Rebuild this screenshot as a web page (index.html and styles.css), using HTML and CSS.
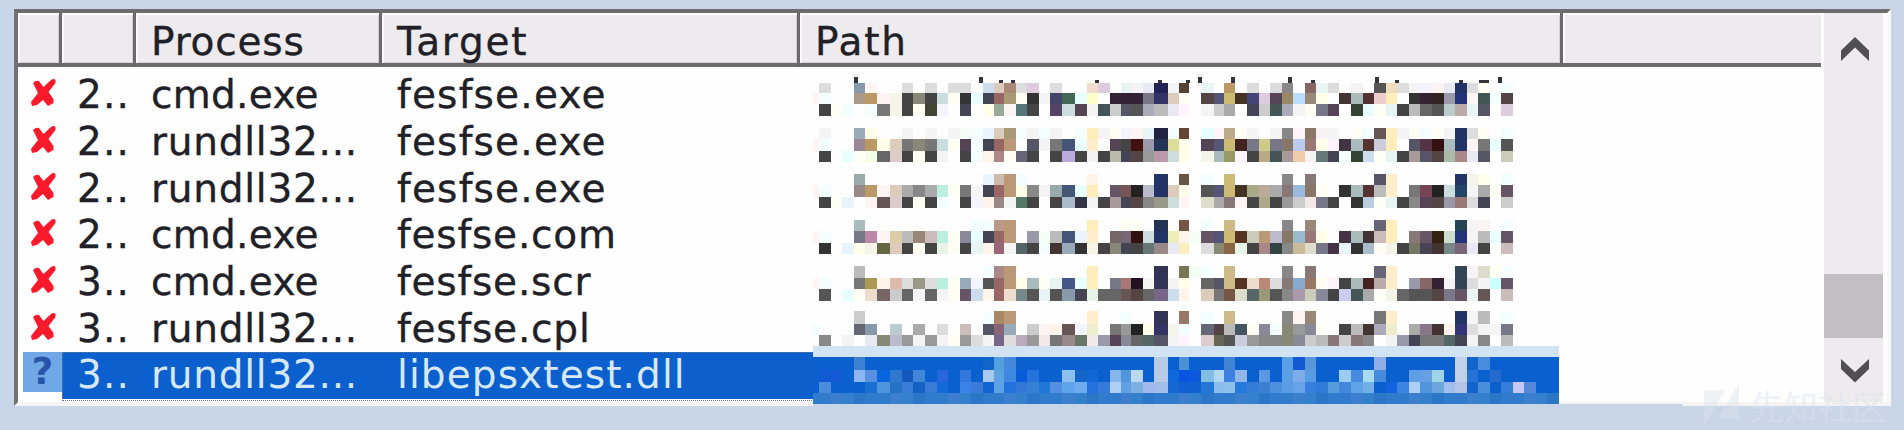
FILE: index.html
```html
<!DOCTYPE html>
<html lang="en">
<head>
<meta charset="utf-8">
<title>Process list</title>
<link rel="stylesheet" href="styles.css">
</head>
<body>
<svg class="defs" width="0" height="0"><symbol id="cross" viewBox="0 0 26 28"><path d="M2 4Q5 1 8 2L12.500 8L20 1Q23-1 24.500 1V4L17.500 13L22.500 20V24L17 27L12 21L6 26L1 27L0 23L7 14Z" fill="#fa1a2c"/></symbol></svg>
<main class="frame">
  <section class="list">
    <div class="grid header">
      <div class="th"></div><div class="th"></div>
      <div class="th"><span class="t process">Process</span></div>
      <div class="th"><span class="t target">Target</span></div>
      <div class="th"><span class="t path">Path</span></div>
      <div class="th last"></div>
    </div>
    <div class="rows">
      <div class="grid row"><svg class="x"><use href="#cross"/></svg><span class="t num">2..</span><span class="t cmd">cmd.exe</span><span class="t exe">fesfse.exe</span></div>
      <div class="grid row"><svg class="x"><use href="#cross"/></svg><span class="t num">2..</span><span class="t run">rundll32...</span><span class="t exe">fesfse.exe</span></div>
      <div class="grid row"><svg class="x"><use href="#cross"/></svg><span class="t num">2..</span><span class="t run">rundll32...</span><span class="t exe">fesfse.exe</span></div>
      <div class="grid row"><svg class="x"><use href="#cross"/></svg><span class="t num">2..</span><span class="t cmd">cmd.exe</span><span class="t com">fesfse.com</span></div>
      <div class="grid row"><svg class="x"><use href="#cross"/></svg><span class="t num">3..</span><span class="t cmd">cmd.exe</span><span class="t com">fesfse.scr</span></div>
      <div class="grid row"><svg class="x"><use href="#cross"/></svg><span class="t num">3..</span><span class="t run">rundll32...</span><span class="t com">fesfse.cpl</span></div>
      <div class="grid row selected"><span class="question">?</span><span class="t num">3..</span><span class="t run">rundll32...</span><span class="t lib">libepsxtest.dll</span></div>
    </div>
  </section>
  <aside class="scrollbar">
    <svg class="arrow" viewBox="0 0 28 24"><path d="M0 13.5L14 0L28 13.5V24L14 10.5L0 24Z"/></svg>
    <div class="thumb"></div>
    <svg class="arrow down" viewBox="0 0 28 24"><path d="M0 0L14 13L28 0V10L14 23.500L0 10Z"/></svg>
  </aside>
</main>
<svg class="mosaic" id="mosaic" width="1904" height="430"></svg>
<div class="watermark"><svg width="36" height="42" viewBox="0 0 36 42"><path d="M0 6H21L0 42ZM35 0V35H13Z"/></svg><span>先知社区</span></div>
<script src="mosaic.js"></script>
</body>
</html>
```
FILE: styles.css
```css
* { box-sizing: border-box; }
body { margin: 0; width: 1904px; height: 430px; overflow: hidden; background: #c8d6e8; font-family: "DejaVu Sans", Verdana, sans-serif; font-size: 39px; color: #202026; }
.defs { position: absolute; }
.frame { display: flex; width: 1877px; height: 397px; margin: 9px 0 0 14px; border: 4px solid; border-color: #6c6c6e #f8f8fa #f6f3f5 #727274; background: #fefefe; }
.list { width: 1806px; }
.grid { display: grid; grid-template-columns: 44px 74px 246px 418px 763px 258px; }
.header { height: 54px; }
.th { height: 54px; padding-left: 15px; background: #edebee; border-right: 3px solid #69696b; border-bottom: 4px solid #6d6b6d; box-shadow: inset 2px 2px #fbfafb, inset -1px -1px #d3d1d4; line-height: 57px; }
.th.last { border-right: 0; box-shadow: inset 2px 2px #fbfafb; }
.rows { padding-top: 5.3px; }
.row { height: 46.7px; line-height: 46px; }
.t { display: block; white-space: pre; -webkit-text-stroke: .35px currentColor; }
.row .t { padding-left: 15px; }
.num { letter-spacing: 1.2px; }
.cmd { letter-spacing: .3px; }
.run { letter-spacing: .75px; }
.exe { letter-spacing: 1.2px; }
.com { letter-spacing: .8px; }
.lib { letter-spacing: 1.1px; }
.selected .t { -webkit-text-stroke: 0; }
.process { letter-spacing: .8px; }
.target { letter-spacing: 1.8px; }
.path { letter-spacing: 1.8px; }
.x { width: 26px; height: 28px; margin: 7px 0 0 13px; }
.selected { position: relative; color: #d7e8fa; background: linear-gradient(#0b60ce, #0b60ce) 44px 0 / 751px 100% no-repeat; }
.selected::after { content: ""; position: absolute; left: 44px; top: 0; width: 751px; height: 100%; border: 1px dotted #63799b; border-right: 0; }
.question { width: 39px; height: 40px; margin-left: 5px; background: #70a8e7; color: #2854a8; font-weight: bold; font-size: 37px; line-height: 40px; text-align: center; }
.scrollbar { width: 59px; height: 389px; background: #edebee; display: flex; flex-direction: column; }
.arrow { width: 28px; height: 24px; margin: 24px 0 0 17px; fill: #505052; }
.thumb { height: 64px; margin-top: 213px; background: #c2c0c3; }
.arrow.down { margin-top: 21px; }
.mosaic { position: absolute; left: 0; top: 0; shape-rendering: crispEdges; }
.watermark { position: absolute; left: 1704px; top: 384px; display: flex; align-items: center; gap: 10px; height: 42px; color: #dce3ed; opacity: .45; font: 34px "Noto Sans CJK SC", sans-serif; }
.watermark svg { fill: #dce3ed; }
```
FILE: mosaic.js
```js
const xs = [812.7,819.3,830.7,842.3,854,865.3,877,890.3,901.7,913.3,925,936.7,948,959.7,971,982.7,994.3,1004.3,1016,1027.3,1039,1050.3,1062,1075,1086.7,1098.3,1110,1121.3,1131.3,1142.7,1154.3,1167.7,1179.3,1189.3,1200.7,1214,1224,1235.3,1247,1258.7,1270,1281.7,1293.3,1304.7,1316.3,1328,1339.3,1351,1362.7,1374,1385.7,1397.3,1409,1420.3,1432,1443.7,1455,1466.7,1478,1489.7,1501.3,1512.7,1524.3,1536,1547.3,1559];

// Each band: top, bottom, then one colour per column; "." leaves a cell empty.
const bands = [
[82.5,93,"   . ddd . . 89a fee . . ddd . | ddd . ddd ddd . cde dcb a87 ddd dcd | . ddd . . edc dcd . dee eee dde | 225 eee 543 . dee . b96 . ddd . | ddd 888 . 866 dee ddd . eee . 555 | edb ddd eee eef fee dde 236 ddd ffe . | eff"],
[93,104.3,"  fee eff . . a98 b96 fee eed 444 887 | 444 cdd ffe 333 dff 445 966 a97 ffe 333 | eee 446 465 dff ffc . 323 323 323 778 | 336 dcb ffe . 544 557 cb7 432 447 dcd | 545 986 bdf 987 ffd . 433 abb 533 ecc | feb . 333 323 322 99a 237 fee 455 eff | 544"],
[104.3,115.6,". 444 ffe eff fff eff 777 eed 444 ffe | 443 eef . 445 . ffd 9a9 fee 577 444 | . 546 cdd 545 eee 455 ccc 556 555 aab | bbb dde fef . eee ccc aaa fff 445 ccc | 455 aab eee ffe 778 545 . 343 dff ffe | dee 444 bbb 666 555 bcc baa dee 556 . | dcd"],
[127.5,139," . eee . . 9ab ffd . . eee . | eee . eee efe eff def dcb a97 eff eee | eff eee . eff feb eee ffe eef fee dee | 224 eff 643 . dff fef ba8 ffe eee . | eee 888 fef 876 eee eee . ffe eff 655 | feb eee ffe eff ffe eee 236 ddd ffe . | eff"],
[139,150.5," fee eff . . 989 b96 ffd dcb 777 887 | 777 cdd ffe 545 eff 445 966 b97 . 556 | eee 777 457 dff fec . 545 444 411 99a | 235 dd9 ffd . 545 557 cb7 422 778 cc8 | 778 876 bce 977 ffd fef 434 abb 533 ccd | feb . 556 534 311 abb 236 fee 777 dff | 555"],
[150.5,162," . 444 . dff ffe efd 666 dcc 444 ffe | 444 eee . 444 eff fed a88 ffe 667 444 | . 444 bad 444 eee 444 bba 445 544 999 | b9a cdd ffd . eed abb 996 fef 444 ba8 | 455 a99 eca eee 677 445 eff 343 cde ffe | dee 444 a99 556 544 aba a88 dde 556 . | ccb"],
[173.5,185," . . . . 9aa . . . . . | . . . . . def cba b97 eff . | . . . . fed . . . . . | 236 . 654 . eff . cb7 . . . | . 888 . 877 . . . . . 556 | fec . . . . . 236 eed ffd . | eff"],
[185,196.6," fee eff . . 988 b96 fee dcb aaa 888 | aaa bed ffe 777 eee 445 966 b97 ffd 888 | eee 9aa 457 dff feb . 656 755 222 bbc | 236 dcb ffd . 555 557 cb7 432 aa8 ba9 | aaa 877 9bd 876 ffe . 333 abb 533 bbb | fec . 777 745 222 cdd 246 eee aaa ffe | 656"],
[196.6,208," . 444 ffe def . fee 655 dcc 444 ffe | 444 eff . 444 eef fed 988 eee 576 444 | . 444 abc 334 eee 444 a99 445 544 888 | 998 cdd fee . ddc aaa 877 fee 444 aa8 | 444 999 ccc edd 778 444 . 333 bcd ffe | dee 444 888 545 544 99a 977 ddd 445 . | ccc"],
[219.5,231," . . . . abb . . . . . | . . . . eff eff b98 b97 . . | . . . . feb . . ffe ffe . | 235 . 754 . eff . cb8 . . . | . 888 . 987 . . . . . 667 | feb . . . . . 245 eee fee . | eff"],
[231,242.8," fee eff . . 778 b8a fee dca bbb 987 | cbb bed ffe 889 dff 445 966 b97 . 99a | efe bbb 457 def fec . 766 767 311 cdd | 236 eeb fed efe 656 557 cb7 532 ccb b97 | bbc 876 9bc 977 ffd . 434 abb 433 cbb | feb . 877 656 321 cdc 237 eee bbb dff | 656"],
[242.8,254.4,". 333 . def ffd eed 664 dcb 444 ffe | 444 ded ffe 444 dee fed 967 eee 566 444 | eff 433 9ab 333 eed 444 887 445 444 677 | 988 dde feb . ddd 887 864 ded 444 a88 | 344 888 cb9 ddc 778 434 def 333 abc ffe | eed 444 776 445 433 788 767 dde 444 . | cbb"],
[265.8,277.5,". . . . bbb . . . . . | . . . . eff a88 b97 . . | . . . . feb . . . . . | 335 . 775 efe eff . cb8 . . . | . 888 . 877 . . . . . 667 | fec . . . . . 345 eee ddc ffe | eff"],
[277.5,289,"  fee eff . . 777 a95 fed dba ddd 998 | ddd bed ffe 9ab eef 555 966 b97 ffd abb | ffe dee 458 dff feb . 778 a77 212 eee | 335 eee ffd . 666 556 cb8 532 edc b87 | ddd 877 8ac 976 ffe fef 444 abb 422 baa | fec . 99a 866 323 eee 345 ddd eee cff | 656"],
[289,300.8,"  . 555 . dff ffe edc 766 ccc 666 eee | 666 eee ffe 656 cde fed 966 edc 788 555 | dee 555 89a 445 ded 666 666 655 544 666 | 768 cde fed . dcb 777 754 ddc 566 997 | 555 888 a9a ccb 889 444 cce 455 aaa ffe | eed 666 555 555 544 778 656 dee 655 . | cbb"],
[310.5,323.7,". . . . ccc . . . . . | . . . . eff a86 b97 . . | . . . . fec . . eff . . | 335 . 976 . eff . cb8 . . . | . 888 fee 987 . . . . . 777 | fec . . . . . 236 eee bbb . | eff"],
[323.7,335.3,"eff . . . 667 89a . bcc . aaa | . ddd . cbb . 556 867 9ab . ccc | fee fed 655 eef eec . 777 999 222 ffd | 336 eed eff . 667 544 bbb 456 ffe 889 | eff 887 999 889 ffe . 444 bbb 433 aab | eec . aaa 878 433 fed 337 ddd eee eee | 778"],
[335.3,345.5,". 888 . eee . dde 887 bbc 999 eee | 999 eee ffe 999 ddd eee 768 ddd bab 999 | edd 777 988 676 edd 99a 545 889 666 566 | 556 eee fef . dcc 665 555 ccd 999 888 | 888 887 889 ccc bbb 877 ccc 877 888 . | eee 99a 445 777 777 566 445 eee 888 . | bbb"],
[345.5,356.6,"d2e3f4 ".repeat(65)],
[356.6,370,"* * * * 3c80d2 * * * * * | * * * * * 1065c8 549fe0 4388dc * * | * * * * * * * * * * | b9cae9 * 4a91d5 * * * 3e83d6 * * * | * 5ba0e6 1159d5 5796d9 * * * * * 90ade9 | * * * * * * c0d2e9 1264ca 488ce0 * | * * * * *"],
[370,381.7,"* 1159d5 1159d5 * 8bb6f2 588fe0 0965df 3179d0 1458be 4286d9 | * 2766dc * 3378dc * a8c9ed 5da3e3 3f88df 0a5bda 2472dc | * * 8bc0ef 1464c9 1067d5 * 86b5eb 5195dd bbdaf2 * | b9cae9 1067d7 0853df 0c59df 80bee3 afd7f1 3d80df 93b6ea * 5b98e3 | * 5ba0e6 7eace8 559de0 * * 9bcdf0 468bdd a7dbf2 478bdc | * * 5f9fe5 68a0e8 9fd4e7 * c0d2e9 2474d6 * 246ad1 | * * * * *"],
[381.7,393,"* 4b8ddd * * * 1970d2 4c95dd 2572c7 3a7cd5 1462c3 | 3a7cd5 1469da * 3b82e8 3b7ad8 1264d0 5da3e3 2172dc 3377d9 3781d3 | 1d78d8 5490e0 5fa3ea 6facef 2271dc 367bdc adcff3 60a0e4 7dafe1 a2b9ef | a1bee9 1667d2 0f61d2 0f61d2 2176d6 8abcec 8ec0ec 2578dc 347dd7 3c80d2 | 4b90df 5b9ce5 67a3e8 367edf 2f7bd7 569bdc 4387dd 60a2e8 72b0e8 * | 1362df 3c84e2 acd0f5 5195dd 6da5df a4bdef b4c5e9 1264ca 498ddd * | 347ddb c3c9f4 5588dc * *"],
[393,403.7,"317bcd 317bcd 3b7fce 3381cd 2c76c8 ".repeat(13)]
];
const svg = document.getElementById("mosaic");
const NS = "http://www.w3.org/2000/svg";
function rect(x, y, w, h, fill) {
  const r = document.createElementNS(NS, "rect");
  for (const [k, v] of Object.entries({ x, y, width: w, height: h, fill })) r.setAttribute(k, v);
  svg.append(r);
}
// Selected cells use "*"; very pale short colours are softened toward the page white.
function tint(c) {
  if (c === "*") return "#0b60cf";
  if (c.length === 3) {
    const ch = [...c].map(d => parseInt(d, 16) * 17);
    if (Math.min(...ch) >= 221 && Math.max(...ch) > 221)
      return `rgb(${ch.map(v => Math.round(v * .6 + 252 * .4)).join(",")})`;
  }
  return "#" + c;
}
rect(812.7, 77, 700, 268.5, "#fefefe");
rect(812.7, 403.5, 870.3, 4, "#c7d5e6");
// Groups between "|" start at columns 0, 10, 20, ...
for (const [top, bottom, colours] of bands) {
  const groups = colours.split("|").map(g => g.trim().split(/\s+/));
  // Sparse bands keep their dark stems in fixed columns.
  if (groups.length > 1 && groups[1].length === 9) groups[1].unshift(".");
  groups.forEach((g, n) => g.forEach((c, k) => {
    const i = (groups.length > 1 ? n * 10 : 0) + k;
    if (c !== "." && i < xs.length - 1)
      rect(xs[i], top, xs[i + 1] - xs[i], bottom - top, tint(c));
  }));
}
// Tops of the letters that stand above the first mosaic row.
[[854,77],[979,77],[999,80],[1011,80],[1095,80],[1158,80],[1186,80],[1198,77],[1231,77],[1288,77],[1311,80],[1375,77],[1395,80],[1459,80],[1479,80],[1498,77]].forEach(([x, y]) => rect(x, y, x === 1479 ? 10 : 4, 82.5 - y, "#34343f"));
```
